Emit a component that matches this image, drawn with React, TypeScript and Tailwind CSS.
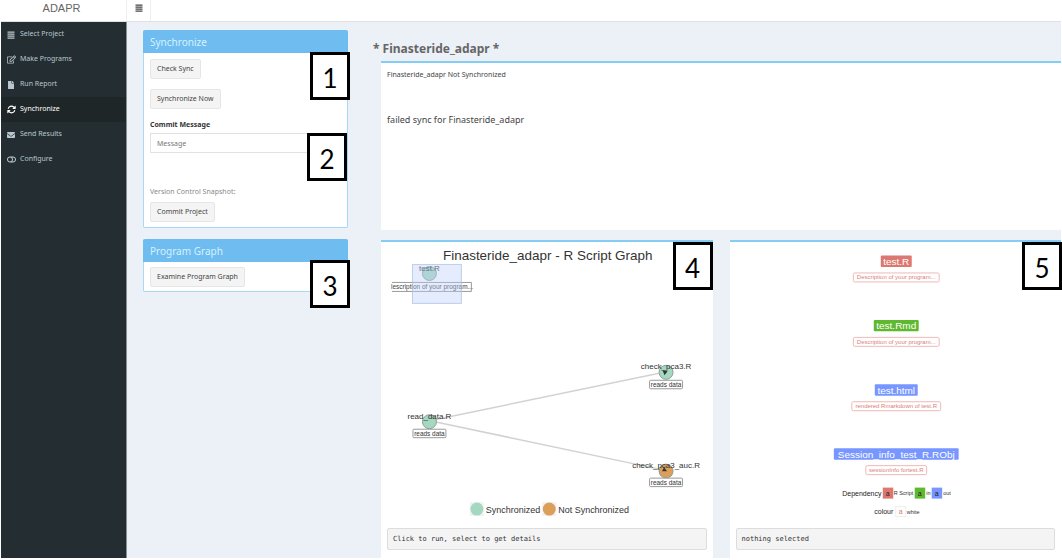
import type { ReactNode } from "react";
import { FaRegEdit, FaFile, FaEnvelope, FaToggleOff } from "react-icons/fa";
import { FaArrowsRotate } from "react-icons/fa6";

const sans = "font-['Noto_Sans',sans-serif]";
const arial = "font-['Liberation_Sans',sans-serif]";

function Bars() {
  return (
    <svg viewBox="0 0 8 8" className="size-2" fill="currentColor" aria-hidden="true">
      <path d="M0.500 0.500h7v1.300h-7z M0.500 2.500h7v1.300h-7z M0.500 4.500h7v1.300h-7z M0.500 6.500h7v1.300h-7z" />
    </svg>
  );
}

const nav = [
  { label: "Select Project", icon: <Bars /> },
  { label: "Make Programs", icon: <FaRegEdit /> },
  { label: "Run Report", icon: <FaFile className="text-[8px]" /> },
  { label: "Synchronize", icon: <FaArrowsRotate />, active: true },
  { label: "Send Results", icon: <FaEnvelope className="text-[8px]" /> },
  { label: "Configure", icon: <FaToggleOff /> },
];

function Callout({ n, place }: { n: number; place: string }) {
  return (
    <div
      className={`absolute z-10 flex h-12 w-10 items-center justify-center border-3 border-black bg-white pt-1 font-['Lato','Noto_Sans',sans-serif] text-[26px] leading-none text-black ${place}`}
    >
      {n}
    </div>
  );
}

function Btn({ children }: { children: ReactNode }) {
  return (
    <button
      type="button"
      className="block h-5 rounded-xs border border-[#e6e6e6] bg-[#f4f4f4] px-1.5 text-[7px] leading-4 text-[#444]"
    >
      {children}
    </button>
  );
}

function Box({ title, children }: { title: string; children: ReactNode }) {
  return (
    <section className="relative rounded-xs border border-t-0 border-[#a6d9f5] bg-white">
      <h2 className="-mx-px h-[23px] rounded-t-xs bg-[#6ebcf0] px-[7px] text-[10px] leading-6 text-[#d6f1ff]">{title}</h2>
      {children}
    </section>
  );
}

function ScriptGraph() {
  return (
    <svg viewBox="0 0 640 548" className={`mt-0.5 w-full ${arial}`} role="img" aria-label="R Script Graph">
      <text x="322" y="33" textAnchor="middle" fontSize="27" fill="#333">Finasteride_adapr - R Script Graph</text>
      <g stroke="#d2d2d2" strokeWidth="3">
        <line x1="86" y1="354" x2="550" y2="258" />
        <line x1="86" y1="354" x2="550" y2="452" />
      </g>
      <g stroke="#8c9f96" strokeWidth="2">
        <circle cx="85" cy="59" r="14" fill="#a5d8c0" />
        <circle cx="85" cy="356" r="14" fill="#a5d8c0" />
        <circle cx="559" cy="257" r="14" fill="#a5d8c0" />
        <circle cx="559" cy="455" r="14" fill="#dc9f5a" />
      </g>
      <path d="M552 253l10 2-6 8z M555 447l6 8-10 0z" fill="#333" />
      <g fill="#fff" stroke="#999" strokeWidth="2">
        <path d="M10 77H169V95H10" />
        <rect x="52" y="371" width="66" height="17" rx="2" />
        <rect x="526" y="273" width="66" height="17" rx="2" />
        <rect x="526" y="469" width="66" height="17" rx="2" />
      </g>
      <g fill="#333" textAnchor="middle" fontSize="16">
        <text x="85" y="55">test.R</text>
        <text x="85" y="350">read_data.R</text>
        <text x="559" y="251">check_pca3.R</text>
        <text x="559" y="448">check_pca3_auc.R</text>
      </g>
      <g fill="#333" textAnchor="middle" fontSize="13">
        <text x="85" y="384">reads data</text>
        <text x="559" y="286">reads data</text>
        <text x="559" y="482">reads data</text>
      </g>
      <text x="8" y="91" fontSize="13" fill="#444">lescription of your program...</text>
      <rect x="51" y="41" width="98" height="78" fill="#bcd0fa" fillOpacity="0.4" stroke="#a9bde0" strokeWidth="2" strokeOpacity="0.7" />
      <rect x="166" y="517" width="28" height="28" fill="#f2f2f2" />
      <rect x="311" y="517" width="28" height="28" fill="#f2f2f2" />
      <circle cx="180" cy="531" r="13" fill="#a5d8c0" />
      <circle cx="325" cy="531" r="13" fill="#dc9f5a" />
      <text x="198" y="538" fontSize="18" fill="#333">Synchronized</text>
      <text x="343" y="538" fontSize="18" fill="#333">Not Synchronized</text>
    </svg>
  );
}

const files = [
  { name: "test.R", note: "Description of your program...", y: 34, w: 62, nw: 172, fill: "#dc7870" },
  { name: "test.Rmd", note: "Description of your program...", y: 163, w: 90, nw: 172, fill: "#5fb92f" },
  { name: "test.html", note: "rendered Rmarkdown of test.R", y: 292, w: 86, nw: 178, fill: "#7896ff" },
  { name: "Session_info_test_R.RObj", note: "sessionInfo fortest.R", y: 420, w: 250, nw: 122, fill: "#7896ff" },
];

function FileGraph() {
  return (
    <svg viewBox="0 0 640 548" className={`mt-0.5 w-full ${arial}`} role="img" aria-label="Program files">
      {files.map((f) => (
        <g key={f.name} textAnchor="middle">
          <rect x={321 - f.w / 2} y={f.y - 11} width={f.w} height="23" rx="2" fill={f.fill} />
          <text x="321" y={f.y + 8} fontSize="20" fill="#fff">{f.name}</text>
          <rect x={321 - f.nw / 2} y={f.y + 24} width={f.nw} height="18" rx="3" fill="#fff" stroke="#eeb9b5" strokeWidth="2" />
          <text x="321" y={f.y + 37} fontSize="12" fill="#d98079">{f.note}</text>
        </g>
      ))}
      <text x="213" y="505" fontSize="14" fill="#222">Dependency</text>
      <rect x="294" y="488" width="21" height="22" fill="#dc7870" />
      <rect x="358" y="488" width="21" height="22" fill="#5fb92f" />
      <rect x="392" y="488" width="21" height="22" fill="#7896ff" />
      <rect x="320" y="526" width="20" height="20" fill="#fff" stroke="#eee" strokeWidth="2" />
      <g fontSize="14" fill="#222" textAnchor="middle">
        <text x="304" y="504">a</text>
        <text x="368" y="504">a</text>
        <text x="402" y="504">a</text>
        <text x="330" y="541" fill="#dc7870">a</text>
      </g>
      <g fontSize="11" fill="#333">
        <text x="316" y="503">R Script</text>
        <text x="381" y="503">in</text>
        <text x="415" y="503">out</text>
        <text x="342" y="540">white</text>
      </g>
      <text x="277" y="541" fontSize="14" fill="#222">colour</text>
    </svg>
  );
}

function Output({ children }: { children: ReactNode }) {
  return (
    <pre className="mt-2.5 h-[22px] rounded-xs border border-[#ddd] bg-[#f4f4f4] px-[5px] font-['DejaVu_Sans_Mono',monospace] text-[7px] leading-5 text-[#333]">
      {children}
    </pre>
  );
}

export default function App() {
  return (
    <div className={`flex min-h-screen flex-col bg-white pr-px pb-0.5 pl-px ${sans}`}>
      <header className="flex h-[22px] border-b border-[#dfe1e6] bg-white">
        <div className={`w-[125px] pr-1 text-center text-[11px] leading-4 text-[#666] ${arial}`}>ADAPR</div>
        <button type="button" aria-label="Toggle navigation" className="flex w-[25px] justify-center border-x border-[#eee] pt-1 text-[#444]">
          <Bars />
        </button>
      </header>
      <div className="flex flex-1">
        <nav className="w-[126px] shrink-0 border-r border-[#8a8f96] bg-[#242d32]">
          {nav.map((n) => (
            <a
              key={n.label}
              href="#"
              className={`flex h-[25px] items-center gap-1 pl-[5px] text-[7px] ${n.active ? "bg-[#1f2628] text-white" : "text-[#b8c7ce]"}`}
            >
              <span className="flex w-2.5 justify-center text-[9px]">{n.icon}</span>
              {n.label}
            </a>
          ))}
        </nav>
        <main className="flex flex-1 gap-[33px] bg-[#ecf0f7] pt-2 pl-4">
          <div className="flex w-[205px] shrink-0 flex-col gap-[11px]">
            <Box title="Synchronize">
              <Callout n={1} place="top-[22px] -right-[3px]" />
              <Callout n={2} place="top-[103px] right-0" />
              <div className="flex h-[174px] flex-col items-start px-1.5 pt-1.5">
                <Btn>Check Sync</Btn>
                <div className="mt-2.5"><Btn>Synchronize Now</Btn></div>
                <label htmlFor="message" className="mt-2.5 text-[7px] leading-3 font-bold text-[#333]">Commit Message</label>
                <input id="message" placeholder="Message" className="mt-0.5 h-5 w-full border border-[#e2e2e2] px-1.5 text-[7px] placeholder:text-[#777]" />
                <p className="mt-[31px] text-[7px] leading-4 text-[#888]">Version Control Snapshot:</p>
                <div className="mt-0.5"><Btn>Commit Project</Btn></div>
              </div>
            </Box>
            <Box title="Program Graph">
              <Callout n={3} place="top-[21px] -right-[3px]" />
              <div className="px-1.5 pt-[5px] pb-1"><Btn>Examine Program Graph</Btn></div>
            </Box>
          </div>
          <div className="flex min-w-0 flex-1 flex-col">
            <h1 className="-ml-2 mt-[9px] h-[22px] text-[12px] leading-5 font-bold text-[#666]">* Finasteride_adapr *</h1>
            <section className="h-[169px] border-t-2 border-[#84cdf3] bg-white px-1.5 pt-1.5 text-[#444]">
              <p className="text-[7px] leading-3">Finasteride_adapr Not Synchronized</p>
              <p className="mt-[31px] text-[9px] leading-4">failed sync for Finasteride_adapr</p>
            </section>
            <div className="mt-2.5 grid flex-1 grid-cols-2 gap-[17px]">
              <section className="relative border-t-2 border-[#84cdf3] bg-white px-1.5">
                <Callout n={4} place="top-0 right-0" />
                <ScriptGraph />
                <Output>Click to run, select to get details</Output>
              </section>
              <section className="relative border-t-2 border-[#84cdf3] bg-white px-1.5">
                <Callout n={5} place="top-0 -right-px" />
                <FileGraph />
                <Output>nothing selected</Output>
              </section>
            </div>
          </div>
        </main>
      </div>
    </div>
  );
}
